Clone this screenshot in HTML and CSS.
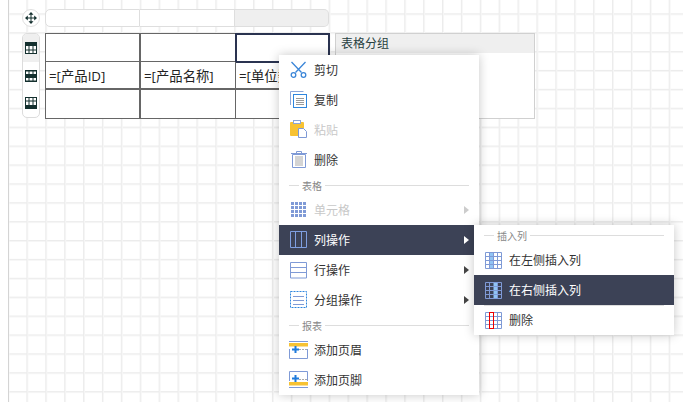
FILE: index.html
```html
<!DOCTYPE html>
<html lang="zh">
<head>
<meta charset="utf-8">
<title>报表设计器</title>
<link rel="stylesheet" href="styles.css">
</head>
<body>
<main class="canvas">
  <section class="designer">
    <div class="handles">
      <button class="move-handle" aria-label="移动">
        <svg width="12" height="12" viewBox="0 0 12 12"><path d="M6 2v8M2 6h8" stroke="#14302f"/><path d="M6 0 3.500 2.800h5zM6 12 3.500 9.200h5zM0 6l2.800-2.500v5zM12 6 9.200 3.500v5z" fill="#14302f"/></svg>
      </button>
      <div class="row-handles">
        <div class="row-handle active">
          <svg width="12" height="12" viewBox="0 0 12 12"><rect x=".5" y=".5" width="11" height="11" fill="#fff" stroke="#14302f"/><rect x="0" y="0" width="12" height="4" fill="#14302f"/><path d="M4 4v8M8 4v8M0 8h12" stroke="#14302f"/></svg>
        </div>
        <div class="row-handle">
          <svg width="12" height="12" viewBox="0 0 12 12"><rect x=".5" y=".5" width="11" height="11" fill="#fff" stroke="#14302f"/><rect x="0" y="4" width="12" height="4" fill="#14302f"/><path d="M0 1h12M0 11h12M4 0v12M8 0v12" stroke="#14302f"/></svg>
        </div>
        <div class="row-handle">
          <svg width="12" height="12" viewBox="0 0 12 12"><rect x=".5" y=".5" width="11" height="11" fill="#fff" stroke="#14302f"/><rect x="0" y="8" width="12" height="4" fill="#14302f"/><path d="M4 0v8M8 0v8M0 4h12" stroke="#14302f"/></svg>
        </div>
      </div>
    </div>
    <div class="table-area">
      <div class="col-handles">
        <div class="col-handle first"></div>
        <div class="col-handle"></div>
        <div class="col-handle selected"></div>
      </div>
      <div class="table">
        <div class="cell"></div><div class="cell"></div><div class="cell current"></div>
        <div class="cell mid">=[产品ID]</div><div class="cell mid">=[产品名称]</div><div class="cell mid">=[单位数量]</div>
        <div class="cell"></div><div class="cell"></div><div class="cell"></div>
      </div>
    </div>
    <aside class="group-panel">
      <div class="group-title">表格分组</div>
    </aside>
  </section>

  <nav class="menu main-menu">
    <div class="item">
      <svg class="icon" width="20" height="20" viewBox="0 0 20 20"><path d="M2.500 2l10 10.500M16.500 2l-10 10.500" stroke="#3b86d8" stroke-width="1.300" fill="none"/><circle cx="4.500" cy="15" r="2.300" fill="#fff" stroke="#3b86d8" stroke-width="1.300"/><circle cx="14.500" cy="15" r="2.300" fill="#fff" stroke="#3b86d8" stroke-width="1.300"/></svg>
      <span>剪切</span>
    </div>
    <div class="item">
      <svg class="icon" width="20" height="20" viewBox="0 0 20 20"><path d="M1.500 15V1.500h13" fill="none" stroke="#8ba6da"/><rect x="4.500" y="4.500" width="13" height="13" fill="#fff" stroke="#2f86de"/><path d="M7 8.500h8M7 10.500h8M7 12.500h8M7 14.500h8" stroke="#9a9a9a"/></svg>
      <span>复制</span>
    </div>
    <div class="item disabled">
      <svg class="icon" width="20" height="20" viewBox="0 0 20 20"><rect x="1" y="2" width="14" height="14" rx="1" fill="#f7c233"/><rect x="4.500" y=".5" width="7" height="3" fill="#fff" stroke="#8ba6da"/><path d="M9.500 8.500h5l3 3v6h-8z" fill="#fff" stroke="#7f9ad6"/></svg>
      <span>粘贴</span>
    </div>
    <div class="item">
      <svg class="icon" width="20" height="20" viewBox="0 0 20 20"><path d="M3.500 4.500h13v13h-13z" fill="#fff" stroke="#7f9ad6"/><path d="M2 3.500h16M7.500 3V1.500h5V3" stroke="#7f9ad6" fill="none"/><rect x="6" y="6" width="8" height="10" fill="#d4d4d4"/></svg>
      <span>删除</span>
    </div>
    <div class="sep"><span>表格</span></div>
    <div class="item disabled">
      <svg class="icon" width="20" height="20" viewBox="0 0 20 20"><path d="M3.500 2v16M7.500 2v16M11.500 2v16M15.500 2v16" stroke="#7f9ad6" stroke-width="3" stroke-dasharray="3 1"/></svg>
      <span>单元格</span><i class="arrow"></i>
    </div>
    <div class="item hot">
      <svg class="icon" width="20" height="20" viewBox="0 0 20 20"><path d="M1.500 1.500h16v16h-16zM6.500 1.500v16M12.500 1.500v16" fill="none" stroke="#7f9fe0"/></svg>
      <span>列操作</span><i class="arrow"></i>
    </div>
    <div class="item">
      <svg class="icon" width="20" height="20" viewBox="0 0 20 20"><path d="M1.500 2.500h16v15.500h-16zM1.500 7.500h16M1.500 12.500h16" fill="none" stroke="#7f9ad6"/></svg>
      <span>行操作</span><i class="arrow"></i>
    </div>
    <div class="item">
      <svg class="icon" width="20" height="20" viewBox="0 0 20 20"><path d="M1.500 1.500h16v16h-16z" fill="none" stroke="#2f86de" stroke-dasharray="2 1"/><path d="M4 6.500h11M4 10.500h11M4 14.500h11" stroke="#7f9ad6"/></svg>
      <span>分组操作</span><i class="arrow"></i>
    </div>
    <div class="sep"><span>报表</span></div>
    <div class="item">
      <svg class="icon wide" width="19" height="18" viewBox="0 0 19 18"><path d="M0 .5h19M.5 8v9.500h18V8" fill="none" stroke="#7f9ad6"/><rect y="2" width="19" height="3.500" fill="#f7c233"/><path d="M10 8.500h9" stroke="#aaa" stroke-dasharray="2 1"/><path d="M3 8.500h7M6.500 5v7" stroke="#1f7bdc" stroke-width="2"/></svg>
      <span>添加页眉</span>
    </div>
    <div class="item">
      <svg class="icon wide" width="19" height="18" viewBox="0 0 19 18"><path d="M.5 10V.5h18V10M0 16.500h19" fill="none" stroke="#7f9ad6"/><rect y="11" width="19" height="3.500" fill="#f7c233"/><path d="M10 8.500h9" stroke="#aaa" stroke-dasharray="2 1"/><path d="M3 7.500h7M6.500 4v7" stroke="#1f7bdc" stroke-width="2"/></svg>
      <span>添加页脚</span>
    </div>
  </nav>

  <nav class="menu sub-menu">
    <div class="sep"><span>插入列</span></div>
    <div class="item">
      <svg class="icon" width="17" height="17" viewBox="0 0 17 17"><rect x="4.500" y="1" width="4" height="15" fill="#90c4f5"/><path d="M.5 .5h16v16H.5zM.5 4.500h16M.5 8.500h16M.5 12.500h16M4.500 .5v16M8.500 .5v16M12.500 .5v16" fill="none" stroke="#7f9ad6"/></svg>
      <span>在左侧插入列</span>
    </div>
    <div class="item hot">
      <svg class="icon" width="17" height="17" viewBox="0 0 17 17"><rect x="8.500" y="1" width="4" height="15" fill="#90c4f5"/><path d="M.5 .5h16v16H.5zM.5 4.500h16M.5 8.500h16M.5 12.500h16M4.500 .5v16M12.500 .5v16" fill="none" stroke="#7f9ad6"/></svg>
      <span>在右侧插入列</span>
    </div>
    <div class="item after-hot">
      <svg class="icon" width="17" height="17" viewBox="0 0 17 17"><path d="M.5 .5h16v16H.5zM.5 4.500h16M.5 8.500h16M.5 12.500h16M4.500 .5v16M8.500 .5v16M12.500 .5v16" fill="none" stroke="#7f9ad6"/><rect x="4.500" y=".5" width="4" height="16" fill="none" stroke="#e00"/></svg>
      <span>删除</span>
    </div>
  </nav>
</main>
</body>
</html>
```
FILE: styles.css
```css
* { box-sizing: border-box; }
html, body { margin: 0; height: 100%; overflow: hidden; background: #fff; }
body { font-family: "Open Sans", "Noto Sans CJK SC", sans-serif; font-size: 12px; color: #333; }
.canvas {
  position: relative; width: 675px; height: 402px; overflow: hidden;
  border-left: 1px solid #d4d4d4; margin-left: 8px;
  background-image:
    linear-gradient(to right, #ececec 1px, #f6f6f6 1px, #f6f6f6 2px, transparent 2px),
    linear-gradient(to bottom, #ececec 1px, #f6f6f6 1px, #f6f6f6 2px, transparent 2px);
  background-size: 18.9px 18.9px;
  background-position: -1.500px -5.600px;
}
.designer { position: absolute; left: 13px; top: 9px; display: flex; align-items: flex-start; }
.handles { width: 18px; display: flex; flex-direction: column; align-items: center; gap: 6px; }
.move-handle {
  width: 18px; height: 18px; border-radius: 50%; padding: 0; border: 1px solid #e0e0e0; background: #fff;
  display: flex; align-items: center; justify-content: center;
}
.row-handles { width: 18px; height: 85px; border: 1px solid #dcdcdc; border-radius: 5px; background: #fff; overflow: hidden; display: flex; flex-direction: column; }
.row-handle { height: 28px; display: flex; align-items: center; justify-content: center; }
.row-handle.active { background: #efefef; height: 29px; }
.table-area { margin-left: 5px; width: 285px; }
.col-handles { display: grid; grid-template-columns: 95px 95px 94px; height: 18px; margin-bottom: 6px; }
.col-handle { border: 1px solid #dedede; border-left: 0; background: #fff; }
.col-handle.first { border-left: 1px solid #dedede; border-radius: 5px 0 0 5px; }
.col-handle.selected { background: #efefef; border-radius: 0 5px 5px 0; }
.table { display: grid; grid-template-columns: 95px 95px 93px; grid-template-rows: 28px 28px 28px; border: 1px solid #666; background: #fff; width: 285px; height: 86px; }
.cell { border-right: 1px solid #666; border-bottom: 1px solid #666; font-size: 13.33px; color: #222; padding-left: 3px; display: flex; align-items: center; white-space: nowrap; overflow: hidden; }
.cell:nth-child(3n+1) { border-right-width: 2px; }
.cell:nth-child(3n) { border-right: 0; }
.cell:nth-child(n+7) { border-bottom: 0; }
.cell.mid { border-bottom-width: 2px; }
.cell.current { outline: 2px solid #2a3350; outline-offset: -1px; }
.group-panel { margin-left: 5px; margin-top: 24px; width: 200px; height: 86px; border: 1px solid #d0d0d0; background: #fff; }
.group-title { height: 19px; background: #efefef; padding-left: 5px; font-size: 12px; line-height: 19px; color: #27403f; }
.menu { position: absolute; background: #fff; box-shadow: 0 0 10px rgba(0,0,0,.22); display: flex; flex-direction: column; font-size: 12px; color: #333; }
.main-menu { left: 270px; top: 55px; width: 200px; height: 340px; }
.sub-menu { left: 465px; top: 225px; width: 200px; height: 110px; }
.item { height: 30px; display: flex; align-items: center; position: relative; flex: none; }
.main-menu .item { padding-left: 10px; }
.main-menu .item > span { margin-left: 5px; }
.main-menu .icon.wide + span { margin-left: 6px; }
.sub-menu .item { padding-left: 11px; }
.sub-menu .item > span { margin-left: 7px; }
.item.disabled { color: #c8c8c8; }
.item.hot { background: #3c4256; color: #fff; }
.after-hot::before { content: ""; position: absolute; left: 10px; right: 10px; top: 0; height: 1px; background: #ddd; }
.arrow { position: absolute; left: 185px; top: 11px; border-left: 5px solid #444; border-top: 4px solid transparent; border-bottom: 4px solid transparent; }
.disabled .arrow { border-left-color: #ccc; }
.hot .arrow { border-left-color: #fff; }
.sep { height: 20px; padding: 0 10px; display: flex; align-items: center; font-size: 10px; color: #888; flex: none; }
.sep::before { content: ""; width: 10px; height: 1px; background: #ddd; }
.sep::after { content: ""; flex: 1; height: 1px; background: #ddd; }
.sep span { padding: 0 3px; }
```
